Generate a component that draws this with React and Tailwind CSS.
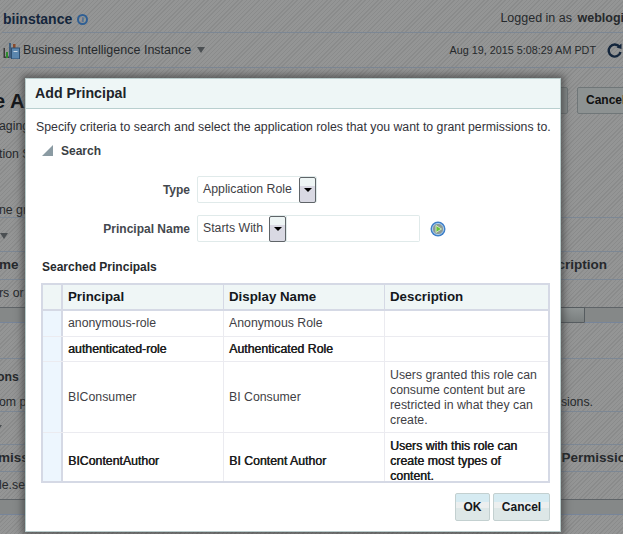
import React from "react";

const font = { fontFamily: '"Liberation Sans", Arial, sans-serif' };

function DropButton() {
  return (
    <div className="w-[17px] h-[26px] shrink-0 border border-[#5f6468] rounded-[2px] bg-[linear-gradient(#eef5f5_0,#eef5f5_35%,#d9d9e3_35%,#d9d9e3_100%)] flex items-center justify-center">
      <div className="w-0 h-0 border-x-[4px] border-x-transparent border-t-[4px] border-t-black" />
    </div>
  );
}

function ScrollBar() {
  return <div className="h-[16px] bg-[#858888] border-t border-b border-t-[#5f6468] border-b-[#77859a]" />;
}

function ChartIcon() {
  return (
    <svg width="17" height="17" viewBox="0 0 17 17" className="shrink-0">
      <rect x="0.5" y="6" width="1.5" height="10" fill="#3a3a3a" />
      <rect x="2" y="14.5" width="5" height="1.5" fill="#3a3a3a" />
      <rect x="3" y="10" width="2" height="6" fill="#2f8a2f" />
      <rect x="6" y="1" width="2" height="15" fill="#3f5f80" />
      <rect x="10" y="2" width="2.5" height="5" fill="#8a4a2a" />
      <rect x="8.5" y="6" width="8" height="11" fill="#5b86ad" stroke="#2f4f70" strokeWidth="1" />
      <rect x="10.5" y="9" width="4" height="1" fill="#c9d6e2" />
    </svg>
  );
}

function GoIcon() {
  return (
    <svg width="16" height="16" viewBox="0 0 16 16">
      <circle cx="8" cy="8" r="7.5" fill="#3f7fc8" />
      <circle cx="8" cy="8" r="5.6" fill="#8d9a94" stroke="#a8cdf0" strokeWidth="1" />
      <path d="M6 4.5 L11.5 8 L6 11.5 Z" fill="#66c23a" stroke="#e8f5d8" strokeWidth="0.8" />
    </svg>
  );
}

function Row({ height, principal, display, desc, bold, last }) {
  const weight = bold ? "text-[#1c1c1c] [text-shadow:0.45px_0_0_#1c1c1c]" : "text-[#3f3f46]";
  return (
    <div className={`flex shrink-0 text-[12.3px] leading-[15px] ${weight} ${last ? "" : "border-b border-[#ebebf0]"}`} style={{ height }}>
      <div className="w-[20px] shrink-0 bg-[#edf6fe] border-r-2 border-[#d5d9e5]" />
      <div className="w-[161px] shrink-0 pl-[5px] flex items-center border-r border-[#ebebf0]">{principal}</div>
      <div className="w-[161px] shrink-0 pl-[5px] flex items-center border-r border-[#ebebf0]">{display}</div>
      <div className="flex-1 pl-[5px] pr-[6px] pt-[6px] overflow-hidden">{desc}</div>
    </div>
  );
}

export default function App() {
  return (
    <div className="relative w-[623px] h-[534px] overflow-hidden text-[#26292c] text-[12.3px] bg-[#8e8f8f] bg-[repeating-linear-gradient(135deg,#8a8b8b_0px,#8a8b8b_1px,#949595_1px,#949595_3px)]" style={font}>
      {/* dimmed page behind the popup */}
      <div className="flex flex-col">
        <div className="h-[33px] flex items-end justify-between pl-[1px] pb-[2px] border-b border-[#7c8794] ml-[2px]">
          <div className="flex items-center gap-[5px]">
            <span className="text-[14px] font-bold text-[#14263c]">biinstance</span>
            <span className="w-[11px] h-[11px] rounded-full border-2 border-[#2f5f94] text-[7px] leading-[7px] font-bold text-center text-[#2f5f94]">i</span>
          </div>
          <div className="text-[12.5px] whitespace-nowrap -mr-[1px] mb-[2px]">
            Logged in as <span className="font-bold ml-[2px]">weblogi</span>
          </div>
        </div>
        <div className="h-[35px] flex items-center justify-between pl-[1px] border-b border-[#7c8794] ml-[2px]">
          <div className="flex items-center gap-[3px] text-[12.5px]">
            <ChartIcon />
            <span>Business Intelligence Instance</span>
            <span className="ml-[3px] w-0 h-0 border-x-[4.5px] border-x-transparent border-t-[6px] border-t-[#4b4f52]" />
          </div>
          <div className="flex items-center gap-[10px] text-[10.8px]">
            <span>Aug 19, 2015 5:08:29 AM PDT</span>
            <svg width="17" height="17" viewBox="0 0 17 17">
              <path d="M13.5 5 A6 6 0 1 0 14.5 10" fill="none" stroke="#14263c" strokeWidth="2.4" />
              <path d="M10.5 5.5 L15.5 1.5 L15.5 7 Z" fill="#14263c" />
            </svg>
          </div>
        </div>
        <div className="h-[49px] flex items-start justify-between pt-[19px]">
          <span className="text-[20px] font-bold text-[#14181c] -ml-[6px] leading-[28px]">e A</span>
          <div className="flex gap-[9px] -mr-[6px]">
            <div className="w-[10px] h-[27px] border border-[#6f7678] rounded-[2px] bg-[#858a8a]" />
            <div className="w-[52px] h-[27px] border border-[#6f7678] rounded-[2px] bg-[#8d9292] text-[12px] font-bold text-[#101010] pl-[8px] leading-[25px]">Cancel</div>
          </div>
        </div>
        <div className="-ml-[1px] h-[28px]">aging</div>
        <div className="-ml-[1px] h-[57px]">tion S</div>
        <div className="-ml-[1px] h-[16px] leading-[16px] border-b border-[#7c8794]">ne gra</div>
        <div className="h-[34px] border-b border-[#7c8794]">
          <div className="w-0 h-0 border-x-[4px] border-x-transparent border-t-[6px] border-t-[#4b4f52] mt-[15px]" />
        </div>
        <div className="h-[28px] flex items-center justify-between border-b border-[#7c8794] text-[13.5px] font-bold">
          <span className="-ml-[1px]">me</span>
          <span className="pr-[16px]">Description</span>
        </div>
        <div className="h-[27px] flex items-center -ml-[1px]">rs or</div>
        <div className="relative">
          <ScrollBar />
          <div className="absolute top-0 left-[500px] w-[85px] h-[16px] bg-[linear-gradient(#8f9494,#7a7f7f)] border border-[#565c60] rounded-[1px]" />
        </div>
        <div className="h-[36px] border-b border-[#7c8794]" />
        <div className="h-[8px]" />
        <div className="h-[20px] font-bold -ml-[3px] leading-[20px]">ons</div>
        <div className="h-[25px] flex justify-between items-end border-b border-[#7c8794]">
          <span className="-ml-[1px]">om p</span>
          <span className="pr-[30px]">sions.</span>
        </div>
        <div className="h-[32px]">
          <div className="w-0 h-0 -ml-[6px] border-x-[4px] border-x-transparent border-t-[6px] border-t-[#4b4f52] mt-[13px]" />
        </div>
        <div className="h-[28px] flex items-center justify-between border-y border-[#7c8794] text-[13.5px] font-bold">
          <span className="-ml-[2px]">miss</span>
          <span className="-mr-[3px]">Permissio</span>
        </div>
        <div className="h-[27px] flex items-center -ml-[1px]">le.se</div>
        <ScrollBar />
      </div>

      {/* popup */}
      <div className="absolute left-[25px] top-[78px] w-[536px] h-[454px] bg-white border border-[#b9cccc] shadow-[0_0_7px_3px_rgba(45,45,45,0.55)] flex flex-col">
        <div className="h-[30px] shrink-0 bg-[#eef6f6] border-b border-[#b9cfcf] flex items-center pl-[9px] text-[14.2px] font-bold text-[#20242a]">
          Add Principal
        </div>
        <div className="text-[#33333a] pl-[10px] pt-[11px] leading-[15px] whitespace-nowrap">
          Specify criteria to search and select the application roles that you want to grant permissions to.
        </div>
        <div className="flex items-center gap-[8px] pl-[16px] mt-[8px] h-[15px]">
          <div className="w-0 h-0 border-l-[11px] border-l-transparent border-b-[11px] border-b-[#8b9ba3]" />
          <span className="text-[12px] font-bold text-[#3a3f44]">Search</span>
        </div>
        <div className="flex items-center mt-[18px] h-[27px]">
          <div className="w-[164px] text-right text-[12px] font-bold text-[#44484e]">Type</div>
          <div className="ml-[7px] w-[120px] h-[27px] border border-[#e0eaea] rounded-[2px] flex items-center justify-between pl-[5px] text-[#3f3f46]">
            <span>Application Role</span>
            <DropButton />
          </div>
        </div>
        <div className="flex items-center mt-[12px] h-[27px]">
          <div className="w-[164px] text-right text-[12px] font-bold text-[#44484e]">Principal Name</div>
          <div className="ml-[7px] w-[90px] h-[27px] border border-[#e0eaea] rounded-l-[2px] flex items-center justify-between pl-[5px] text-[#3f3f46]">
            <span>Starts With</span>
            <DropButton />
          </div>
          <div className="w-[133px] h-[27px] border border-l-0 border-[#e0eaea] rounded-r-[2px]" />
          <div className="ml-[10px] flex"><GoIcon /></div>
        </div>
        <div className="pl-[16px] mt-[18px] text-[12px] font-bold text-[#26292c] leading-[15px]">Searched Principals</div>
        <div className="ml-[15px] mt-[8px] w-[509px] h-[200px] border-2 border-[#d5d9e5] flex flex-col overflow-hidden">
          <div className="flex h-[26px] shrink-0 bg-[#eff6f6] border-b-2 border-[#d5d9e5] text-[13.3px] font-bold text-[#14181c]">
            <div className="w-[20px] shrink-0 border-r-2 border-[#d5d9e5]" />
            <div className="w-[161px] shrink-0 pl-[5px] flex items-center border-r border-[#d5d9e5]">Principal</div>
            <div className="w-[161px] shrink-0 pl-[5px] flex items-center border-r border-[#d5d9e5]">Display Name</div>
            <div className="flex-1 pl-[5px] flex items-center">Description</div>
          </div>
          <Row height={26} principal="anonymous-role" display="Anonymous Role" />
          <Row height={25} principal="authenticated-role" display="Authenticated Role" bold />
          <Row height={71} principal="BIConsumer" display="BI Consumer" desc="Users granted this role can consume content but are restricted in what they can create." />
          <Row height={56} principal="BIContentAuthor" display="BI Content Author" desc="Users with this role can create most types of content." bold last />
        </div>
        <div className="flex justify-end gap-[3px] pr-[10px] mt-[10px]">
          <div className="w-[35px] h-[28px] border border-[#c3d0d0] rounded-[2px] bg-[linear-gradient(#d6ebf2_0,#d6ebf2_32%,#ecefef_32%,#ecefef_55%,#dde7e7_55%,#dde7e7_100%)] text-[12px] font-bold text-[#14181c] flex items-center justify-center">OK</div>
          <div className="w-[57px] h-[28px] border border-[#c3d0d0] rounded-[2px] bg-[linear-gradient(#d6ebf2_0,#d6ebf2_32%,#ecefef_32%,#ecefef_55%,#dde7e7_55%,#dde7e7_100%)] text-[12px] font-bold text-[#14181c] flex items-center justify-center">Cancel</div>
        </div>
      </div>
    </div>
  );
}
